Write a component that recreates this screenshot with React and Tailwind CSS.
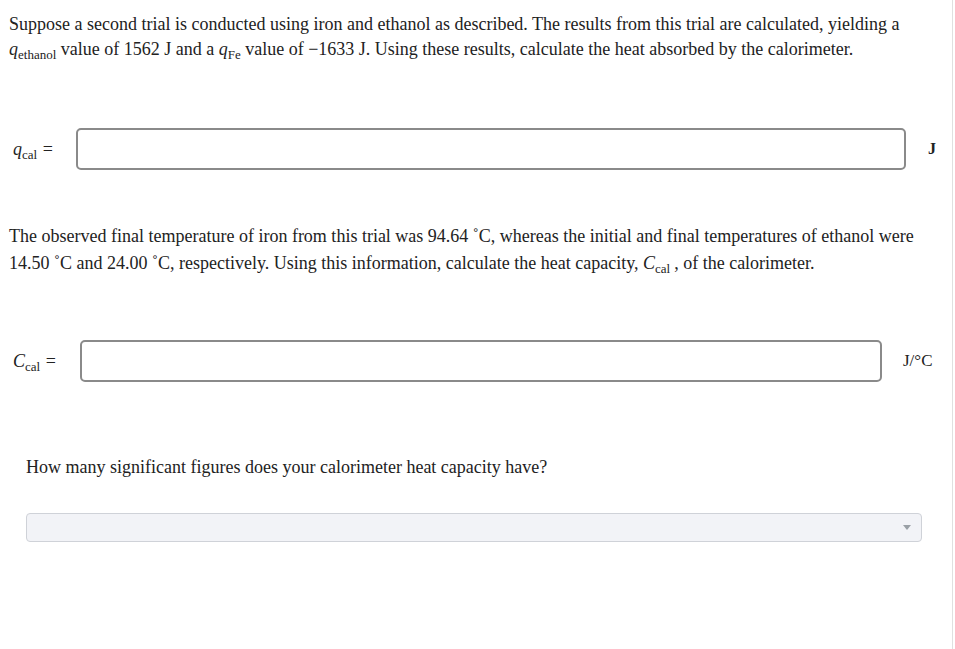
import React from "react";

function Sub({ children }) {
  return (
    <span className="not-italic text-[13px] relative top-[4px] leading-none">
      {children}
    </span>
  );
}

function Q({ sub }) {
  return (
    <span className="whitespace-nowrap">
      <span className="italic">q</span>
      <Sub>{sub}</Sub>
    </span>
  );
}

function C() {
  return (
    <span className="whitespace-nowrap">
      <span className="italic">C</span>
      <Sub>cal</Sub>
    </span>
  );
}

export default function App() {
  return (
    <div className="w-[955px] h-[649px] bg-white text-[#222] flex font-['Liberation_Serif','Times_New_Roman',serif]">
      <div className="w-[953px] border-r border-[#e0e0e0] flex flex-col">
        <p className="pl-[9px] pr-[40px] pt-[12px] text-[18px] leading-[25px]">
          Suppose a second trial is conducted using iron and ethanol as described. The results from this trial are calculated, yielding a{" "}
          <Q sub="ethanol" /> value of 1562 J and a <Q sub="Fe" /> value of −1633 J. Using these results, calculate the heat absorbed by the calorimeter.
        </p>

        <div className="flex items-center mt-[66px] h-[42px]">
          <div className="w-[76px] pl-[13px] text-[18px]">
            <Q sub="cal" /> <span className="ml-[1px]">=</span>
          </div>
          <div className="w-[830px] h-[42px] border-2 border-[#8a8a8a] rounded-[5px]" />
          <div className="ml-[22px] text-[16px] font-bold">J</div>
        </div>

        <p className="pl-[9px] pr-[30px] mt-[53px] text-[18px] leading-[27px]">
          The observed final temperature of iron from this trial was 94.64 ˚C, whereas the initial and final temperatures of ethanol were 14.50 ˚C and 24.00 ˚C, respectively. Using this information, calculate the heat capacity,{" "}
          <C />
          <span className="ml-[4px]">,</span> of the calorimeter.
        </p>

        <div className="flex items-center mt-[63px] h-[42px]">
          <div className="w-[80px] pl-[13px] text-[18px]">
            <C /> <span className="ml-[1px]">=</span>
          </div>
          <div className="w-[802px] h-[42px] border-2 border-[#8a8a8a] rounded-[5px]" />
          <div className="ml-[21px] text-[17px]">J/°C</div>
        </div>

        <p className="pl-[26px] mt-[73px] text-[18px] leading-[24px]">
          How many significant figures does your calorimeter heat capacity have?
        </p>

        <div className="ml-[26px] mt-[34px] w-[896px] h-[29px] bg-[#f2f3f7] border border-[#cfd2d8] rounded-[4px] flex items-center justify-end pr-[10px]">
          <svg width="8" height="5" viewBox="0 0 8 5">
            <path d="M0 0 L8 0 L4 5 Z" fill="#9aa0a6" />
          </svg>
        </div>
      </div>
    </div>
  );
}
